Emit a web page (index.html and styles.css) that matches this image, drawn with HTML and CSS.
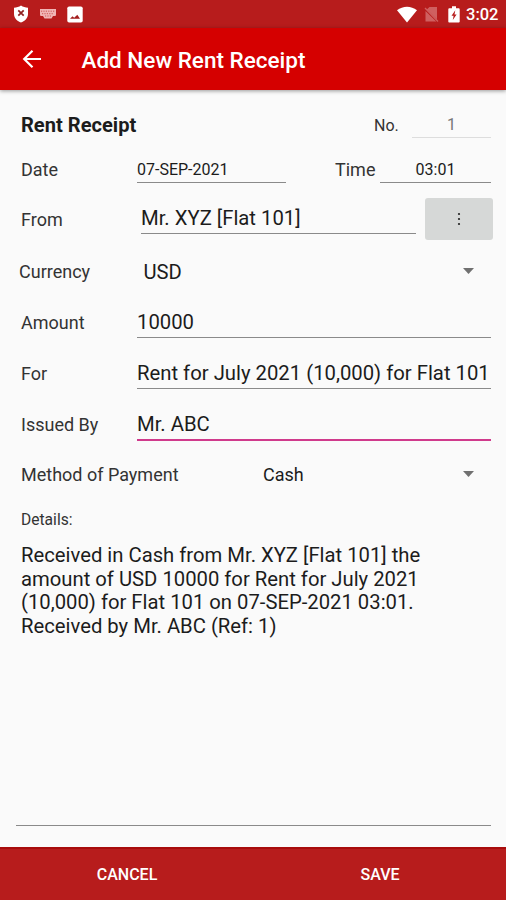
FILE: index.html
```html
<!DOCTYPE html>
<html lang="en">
<head>
<meta charset="utf-8">
<title>Add New Rent Receipt</title>
<link rel="stylesheet" href="styles.css">
</head>
<body>
<div class="status">
  <svg class="shield" width="16" height="18" viewBox="0 0 16 18"><path d="M8 .5C6 2 3.500 2.600 1 2.700V9c0 4.300 3.500 7.300 7 8.500 3.500-1.200 7-4.200 7-8.500V2.700C12.500 2.600 10 2 8 .5z" fill="#fff"/><path d="M5.300 5.300l5.400 5.400M10.700 5.300l-5.400 5.400" stroke="#8f2020" stroke-width="1.700"/></svg>
  <svg class="keys" width="18" height="12" viewBox="0 0 18 12"><path d="M1 1h16v5.500c0 1-.5 1.500-1.500 1.500H14l-1.500 2.500h-7L4 8H2.500C1.500 8 1 7.500 1 6.500z" fill="#f0b5b5"/><path d="M2 3.200h14M3 5.700h12M6 8h6" stroke="#c94b4b" stroke-width=".9" stroke-dasharray="1.200 1.200"/></svg>
  <svg class="photo" width="16" height="17" viewBox="0 0 16 17"><rect x=".3" y=".5" width="15.400" height="16" rx="1.800" fill="#fff"/><path d="M3 12.800l2.500-2.600 1.700 1.600L10.300 8.800l2.700 4z" fill="#a31d1d"/></svg>
  <span class="grow"></span>
  <svg class="wifi" width="20" height="17" viewBox="0 0 20 17"><path d="M0 4.300C6-.6 14-.6 20 4.300L10 16.500z" fill="#fff"/></svg>
  <svg class="sim" width="16" height="17" viewBox="0 0 16 17"><path d="M5.500 1H13v12.500L2.800 3.500zM1.500 5l10.800 10.500H1.500z" fill="#cf6060"/><path d="M1 2l13 13.500" stroke="#cf6060" stroke-width="1.300"/></svg>
  <svg class="battery" width="12" height="17" viewBox="0 0 12 17"><path d="M4 .3h4v1.900h2.500c.7 0 1.200.5 1.200 1.200v12c0 .7-.5 1.200-1.200 1.200h-9c-.7 0-1.200-.5-1.200-1.200v-12c0-.7.5-1.200 1.200-1.200H4z" fill="#fff"/><path d="M7.300 4.300L3.500 9.800H5.600L4.800 14l3.800-5.600H6.500z" fill="#b71c1c"/></svg>
  <span class="clock">3:02</span>
</div>
<header class="appbar">
  <svg width="20" height="20" viewBox="0 0 20 20" fill="none" stroke="#fff" stroke-width="2.200"><path d="M19 10H2.500M10.500 1.700L2.200 10l8.300 8.300"/></svg>
  <h1>Add New Rent Receipt</h1>
</header>
<main>
  <div class="row heading">
    <h2>Rent Receipt</h2>
    <label class="no">No.</label>
    <div class="field number">1</div>
  </div>
  <div class="row when">
    <label class="name">Date</label>
    <div class="field date">07-SEP-2021</div>
    <label class="timelabel">Time</label>
    <div class="field time">03:01</div>
  </div>
  <div class="row from">
    <label class="name">From</label>
    <div class="field">Mr. XYZ [Flat 101]</div>
    <button class="more"><svg width="4" height="14" viewBox="0 0 4 14" fill="#222"><circle cx="2" cy="2" r="1.100"/><circle cx="2" cy="7" r="1.100"/><circle cx="2" cy="12" r="1.100"/></svg></button>
  </div>
  <div class="row currency">
    <label class="name">Currency</label>
    <div class="select">USD</div>
    <svg class="caret" width="11" height="6" viewBox="0 0 11 6"><path d="M0 0h11L5.500 6z" fill="#707070"/></svg>
  </div>
  <div class="row amount">
    <label class="name">Amount</label>
    <div class="field">10000</div>
  </div>
  <div class="row for">
    <label class="name">For</label>
    <div class="field">Rent for July 2021 (10,000) for Flat 101</div>
  </div>
  <div class="row issued">
    <label class="name">Issued By</label>
    <div class="field active">Mr. ABC</div>
  </div>
  <div class="row method">
    <label class="name">Method of Payment</label>
    <div class="select">Cash</div>
    <svg class="caret" width="11" height="6" viewBox="0 0 11 6"><path d="M0 0h11L5.500 6z" fill="#707070"/></svg>
  </div>
  <div class="details-label">Details:</div>
  <div class="details">Received in Cash from Mr. XYZ [Flat 101] the<br>amount of USD 10000 for Rent for July 2021<br>(10,000) for Flat 101 on 07-SEP-2021 03:01.<br>Received by Mr. ABC (Ref: 1)</div>
</main>
<footer>
  <button>CANCEL</button>
  <button>SAVE</button>
</footer>
</body>
</html>
```
FILE: styles.css
```css
* { box-sizing: border-box; }
body {
  margin: 0;
  height: 900px;
  display: flex;
  flex-direction: column;
  overflow: hidden;
  background: #fafafa;
  color: #1c1c1c;
  font-family: Roboto, sans-serif;
}
svg { display: block; flex: none; }
h1, h2 { margin: 0; }
button { border: 0; padding: 0; font-family: inherit; }
.status {
  height: 28px;
  flex: none;
  display: flex;
  align-items: center;
  padding: 0 8px 0 13px;
  background: #b71c1c;
  color: #fff;
}
.keys { margin-left: 10px; }
.photo { margin-left: 10px; }
.grow { flex: 1; }
.sim { margin-left: 7px; }
.battery { margin-left: 8px; }
.clock { margin-left: 6px; width: 32px; font-size: 16.500px; font-weight: 500; line-height: 28px; white-space: nowrap; padding-top: 2px; }
.appbar {
  height: 62px;
  flex: none;
  display: flex;
  align-items: center;
  padding-left: 22px;
  background: #d50000;
  color: #fff;
  box-shadow: 0 1px 4px rgba(0, 0, 0, .4);
}
.appbar h1 { margin: 1px 0 0 39.500px; font-size: 22.500px; font-weight: 500; line-height: 30px; white-space: nowrap; }
main { flex: 1; display: flex; flex-direction: column; padding: 0 15px 0 16px; }
.row { display: flex; align-items: flex-end; padding-left: 5px; flex: none; line-height: 24px; white-space: nowrap; }
.name { width: 116px; flex: none; font-size: 18px; color: #333; }
.field { flex: 1; font-size: 20.300px; padding-bottom: 3px; border-bottom: 1px solid #8a8a8a; }
.select { flex: 1; font-size: 20.200px; }
.caret { margin: 0 17px 10px 0; }

.heading { height: 48px; }
.heading h2 { flex: 1; font-size: 20.100px; line-height: 24px; font-weight: 700; margin-bottom: 1px; }
.no { width: 38px; font-size: 16px; color: #333; }
.field.number { flex: none; width: 79px; font-size: 16px; text-align: center; padding-bottom: 0; border-color: #ddd; color: #777; }

.when { height: 45px; }
.when .name, .timelabel { margin-bottom: 1px; }
.field.date { flex: none; width: 149px; font-size: 16px; padding-bottom: 0; }
.timelabel { width: 45px; margin-left: 49px; font-size: 18px; color: #333; }
.field.time { font-size: 16px; text-align: center; padding-bottom: 0; }

.from { height: 57px; margin-right: -2px; }
.from .name { width: 120px; margin-bottom: 8px; }
.from .field { margin-bottom: 6px; }
.more { width: 68px; height: 42px; margin-left: 9px; display: flex; align-items: center; justify-content: center; background: #d6d8d7; border-radius: 3px; }

.currency { height: 44px; padding-left: 3px; }
.currency .name { width: 124.500px; }
.amount { height: 54px; }
.for { height: 51px; }
.amount .name, .for .name { margin-bottom: 3px; }
.issued { height: 52px; }
.issued .name { margin-bottom: 4px; }
.field.active { border-bottom: 2px solid #d03a8c; }
.method { height: 46px; }
.method .name { width: 242px; }
.method .select { font-size: 18px; }

.details-label { height: 45px; padding: 21px 0 0 5px; flex: none; font-size: 15.600px; line-height: 24px; color: #333; }
.details { height: 294px; flex: none; padding: 12px 0 0 5px; font-size: 20.250px; line-height: 23.700px; white-space: nowrap; border-bottom: 1px solid #8a8a8a; }

footer { height: 53px; flex: none; display: flex; background: #b71c1c; border-top: 2px solid #a80c0c; }
footer button { flex: 1; background: none; color: #fff; font-size: 16px; font-weight: 500; padding: 0 0 0 1px; }
```
